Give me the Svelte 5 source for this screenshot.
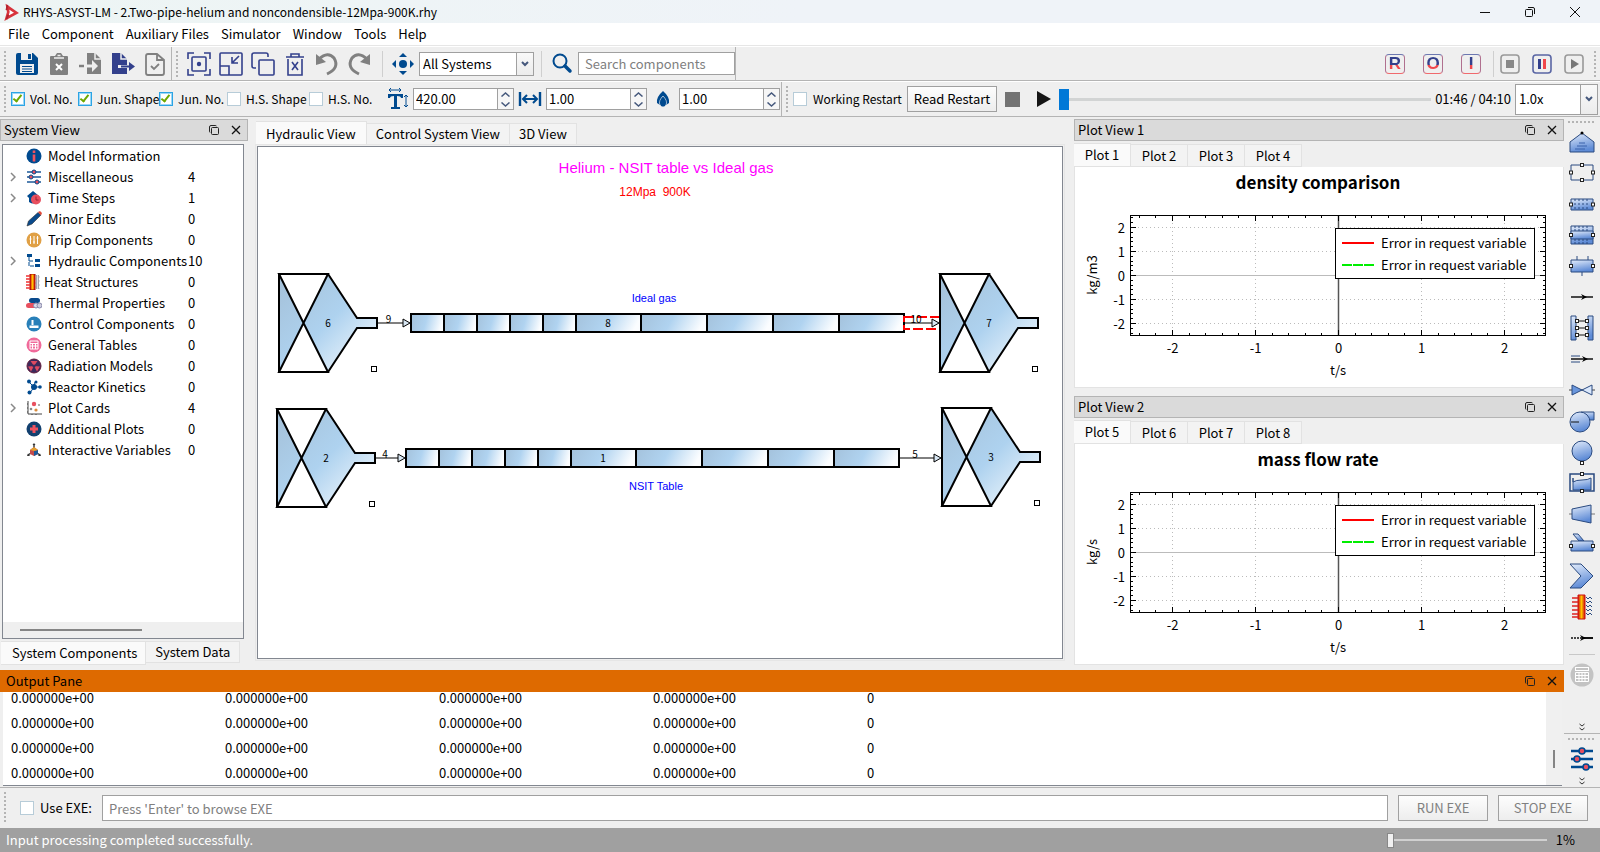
<script>
  /**
   * Main window of the plant modelling tool: toolbars, component tree,
   * hydraulic canvas, plot docks and the output pane.
   */

  const menus = ['File', 'Component', 'Auxiliary Files', 'Simulator', 'Window', 'Tools', 'Help'];

  // Gradients shared by the palette glyphs (defined once in the markup)
  const B = 'fill="url(#blue)" stroke="#2a4a80"';
  const node = (x, y) => `<rect x="${x - 1.5}" y="${y - 1.5}" width="3" height="3" fill="#fff" stroke="#222"/>`;

  const icons = {
    logo: '<path d="M6 4 16 11 5 17 7 10z" fill="#fff" stroke="#d8343c" stroke-width="3"/><path d="M6 2 5 8M5 18l2-5" stroke="#b0262e" stroke-width="2"/>',
    save: '<path d="M1 3q0-2 2-2h15l5 5v15q0 2-2 2H3q-2 0-2-2z" fill="#004a8f"/><path d="M6 1h11v7H6z" fill="#efefef"/><path d="M13 2h3v5h-3z" fill="#004a8f"/><path d="M5 12h14v9H5z" fill="#efefef"/><path d="M7 14.500h10M7 17h10M7 19.500h10" stroke="#004a8f"/>',
    clear: '<path d="M3 5q0-1 1-1h4l2-3h4l2 3h4q1 0 1 1v17q0 1-1 1H4q-1 0-1-1z" fill="#808080"/><path d="M7 6h10M10.500 3.500h3" stroke="#efefef" stroke-width="1.500"/><path d="m9 12 6 6m0-6-6 6" stroke="#fff" stroke-width="2"/>',
    importFile: '<path d="M8 1h8l6 6v15H8z" fill="#808080"/><path d="M16 1v6h6" fill="none" stroke="#efefef" stroke-width="1.500"/><path d="M0 14h5" stroke="#808080" stroke-width="2.500"/><path d="M6 14h9" stroke="#efefef" stroke-width="3"/><path d="m13 8 6 6-6 6z" fill="#efefef"/>',
    exportFile: '<path d="M1 1h9l6 6v15H1z" fill="#33408c"/><path d="M10 1v6h6" fill="none" stroke="#efefef" stroke-width="1.500"/><path d="M7 13h16v3H7z" fill="#efefef"/><path d="M10 14.500h9" stroke="#33408c" stroke-width="2"/><path d="m18 10 6 4.500-6 4.500z" fill="#33408c"/>',
    checkFile: '<path d="M3 4q0-2 2-2h9l7 6v13q0 2-2 2H5q-2 0-2-2zM14 2v6h7" fill="none" stroke="#808080" stroke-width="1.800"/><path d="m8 14 3 3 5-5" fill="none" stroke="#808080" stroke-width="1.800"/>',
    focus: '<path d="M1 7V1h6M17 1h6v6M23 17v6h-6M7 23H1v-6" fill="none" stroke="#33408c" stroke-width="1.600"/><rect x="5" y="5" width="14" height="14" rx="1" fill="none" stroke="#33408c" stroke-width="1.600"/><circle cx="12" cy="12" r="2.200" fill="#33408c"/>',
    shrink: '<rect x="1" y="1" width="22" height="22" rx="1" fill="none" stroke="#33408c" stroke-width="1.600"/><path d="M1 14h9v9M20 4l-7 7M13 5v6h6" fill="none" stroke="#33408c" stroke-width="1.600"/>',
    copy: '<rect x="8" y="8" width="15" height="15" rx="1" fill="none" stroke="#33408c" stroke-width="1.600"/><path d="M5 16H3q-2 0-2-2V3q0-2 2-2h12q2 0 2 2v2" fill="none" stroke="#33408c" stroke-width="1.600"/>',
    trash: '<path d="M3 5h18M8 5V2h8v3M5 7v16h14V7" fill="none" stroke="#33408c" stroke-width="1.600"/><path d="m9 10 6 8m0-8-6 8" stroke="#33408c" stroke-width="1.600"/>',
    undo: '<path d="M4 7q9-8 15-1 6 10-7 16" fill="none" stroke="#808080" stroke-width="3"/><path d="M1 2v11l10-3z" fill="#808080"/>',
    redo: '<path d="M20 7q-9-8-15-1-6 10 7 16" fill="none" stroke="#808080" stroke-width="3"/><path d="M23 2v11l-10-3z" fill="#808080"/>',
    pan: '<circle cx="12" cy="12" r="4" fill="#004a8f"/><path d="m12 1 4 4H8zM12 23l4-4H8zM1 12l4-4v8zM23 12l-4-4v8z" fill="#004a8f"/>',
    search: '<circle cx="10" cy="9" r="6.500" fill="none" stroke="#004a8f" stroke-width="2"/><path d="m15 14 5 5" stroke="#004a8f" stroke-width="3.500" stroke-linecap="round"/>',
    stop: '<rect x="3" y="3" width="18" height="18" rx="3" fill="none" stroke="#999" stroke-width="1.600"/><path d="M8 8h8v8H8z" fill="#888"/>',
    pause: '<rect x="3" y="3" width="18" height="18" rx="3" fill="none" stroke="#5a66a4" stroke-width="1.600"/><path d="M8 7h3v10H8z" fill="#33408c"/><path d="M13 7h3v10h-3z" fill="#f0474c"/>',
    play: '<rect x="3" y="3" width="18" height="18" rx="3" fill="none" stroke="#999" stroke-width="1.600"/><path d="m9 7 8 5-8 5z" fill="#777"/>',
    textSize: '<path d="M3 7h15v4h-2q0-2-4-2v11h3v2H6v-2h3V9q-4 0-4 2H3z" fill="#004a8f"/><path d="M4 3h12M6 1 4 3l2 2M14 1l2 2-2 2M21 8v12M19 10l2-2 2 2M19 18l2 2 2-2" fill="none" stroke="#004a8f"/>',
    width: '<path d="M2 5v14M22 5v14" stroke="#004a8f" stroke-width="2.400"/><path d="M5 12h14M9 8l-4 4 4 4M15 8l4 4-4 4" fill="none" stroke="#004a8f" stroke-width="2"/>',
    drop: '<path d="M12 4q7 6 6 12l-3 2q1-5-3-9-4 4-3 9l-3-2Q5 10 12 4z" fill="#004a8f"/><path d="M12 9q5 5 3 9-3 4-6 0-2-4 3-9z" fill="#004a8f" stroke="#efefef" stroke-width=".6"/>',
    info: '<circle cx="8" cy="8" r="7.500" fill="#004a8f"/><path d="M8 2.500v2.500M8 6.500v7" stroke="#f0525f" stroke-width="2.600"/>',
    sliders: '<path d="M1 3h14M1 8h14M1 13h14" stroke="#1d5a99" stroke-width="1.400"/><g fill="#e8505f" stroke="#004a8f"><circle cx="8" cy="3" r="2"/><circle cx="5" cy="8" r="2"/><circle cx="11" cy="13" r="2"/></g>',
    time: '<path d="M1 6 7 1l6 5v6q-6 3-10 0V8z" fill="#004a8f"/><circle cx="10" cy="9.500" r="5" fill="#e8505f"/><path d="M10 6.500v3.500h2.500" stroke="#923" fill="none"/>',
    pencil: '<path d="m1 15 1.500-5L12 1.500 15 4 6 13z" fill="#0a4a8c" stroke="#333" stroke-width=".6"/><path d="m12 1 2-1 2 2-1 2.500z" fill="#e04a3a"/>',
    trip: '<circle cx="8" cy="8" r="7.500" fill="#e0a045"/><path d="M4.500 4v8M8 4v8M11.500 4v8M3.500 7h2M7 10h2M10.500 6h2" stroke="#fff"/>',
    hydraulic: '<path d="M1 1h5v3H1zM9 6h5v3H9zM9 11h5v3H9z" fill="#004a8f"/><path d="M3 4v9h5M3 8h5" stroke="#004a8f" fill="none" stroke-dasharray="4 1"/>',
    heat: '<path d="M4 0h5v16H4z" fill="url(#hot)" stroke="#a00"/><path d="M0 2h4M0 5h4M0 8h4M0 11h4M0 14h4" stroke="#e33" stroke-width="1.400"/><path d="m10 1 1 2-1 2 1 2-1 2 1 2-1 2 1 2M12 1l1 2-1 2 1 2-1 2 1 2-1 2 1 2" stroke="#667" fill="none" stroke-width=".8"/>',
    thermal: '<rect x="3" y="3" width="11" height="5" rx="2.500" fill="#0a4a8c"/><rect x="0" y="8" width="12" height="5" rx="2.500" fill="#e8505f"/><circle cx="10" cy="10.500" r="2.500" fill="#dde" stroke="#88a"/><circle cx="13.500" cy="10.500" r="2.500" fill="#ccd" stroke="#88a"/>',
    control: '<circle cx="8" cy="8" r="7.500" fill="#2980b9"/><path d="M3.500 9.500h9V12h-9zM5.500 4h2v5h-2z" fill="#fff"/>',
    tables: '<circle cx="8" cy="8" r="7.500" fill="#f06a9a"/><path d="M4 4h8v8H4zM4 6.500h8M4 9h8M6.500 6v6M9.500 6v6" stroke="#fff" fill="none"/>',
    radiation: '<circle cx="8" cy="8" r="7" fill="#3c2a5c" stroke="#611b3c"/><g fill="#e04a60"><path d="M8 8 4.500 3h7zM8 8l6 .500-3 5zM8 8l-6 .500 3 5z"/></g><circle cx="8" cy="8" r="1.600" fill="#3c2a5c"/>',
    kinetics: '<path d="M8 8 3 3M8 8l6 0M8 8l-4 6M8 8l1-5" stroke="#004a8f"/><g fill="#004a8f"><circle cx="8" cy="8" r="3"/><circle cx="3" cy="2.500" r="2"/><circle cx="14" cy="8" r="1.800"/><circle cx="3.500" cy="13.500" r="2"/><circle cx="10" cy="3" r="1.500"/></g>',
    plots: '<path d="M2 1v13h14M1 4h1M1 8h1M1 12h1M6 14v1M10 14v1" stroke="#444" fill="none"/><circle cx="8" cy="4" r="2.200" fill="#e8505f"/><circle cx="5" cy="9" r="1.300" fill="#888"/><circle cx="10" cy="10" r="1.600" fill="#d98a3a"/><circle cx="13" cy="5" r="1.100" fill="#999"/>',
    plus: '<circle cx="8" cy="8" r="7.500" fill="#12406f"/><path d="M8 4v8M4 8h8" stroke="#f0525f" stroke-width="3"/>',
    interactive: '<path d="M8 2v5M8 9l-6 4M8 9l6 4" stroke="#333" stroke-width="1.400"/><path d="m8 5 4 3v4l-4 2-4-2V8z" fill="#c54a4a"/><path d="m8 9 4-1v4l-4 2z" fill="#1d5a99"/><path d="m8 5 4 3-4 1-4-1z" fill="#e0a030"/><path d="m6.500 3 1.500-2 1.500 2zM1 14l1-2.500L4 14zM15 14l-1-2.500-2 2.500z" fill="#333"/>',
    calc: '<circle cx="13" cy="13" r="11.500" fill="#c3c3c3"/><rect x="6.500" y="5.500" width="13" height="3" fill="none" stroke="#fff"/><path d="M6.500 10.500h13v9h-13zM6.500 13.500h13M6.500 16.500h13M10 10.500v9M13 10.500v9M16 10.500v9" fill="none" stroke="#fff"/>',
    bigSliders: '<path d="M2 5h22M2 13h22M2 21h22" stroke="#004a8f" stroke-width="2.400"/><g fill="#e8505f" stroke="#004a8f" stroke-width="1.600"><circle cx="13" cy="5" r="3"/><circle cx="8" cy="13" r="3"/><circle cx="17" cy="21" r="3"/></g>'
  };

  const editTools = [
    ['Save', icons.save], ['Clear', icons.clear], ['Import', icons.importFile],
    ['Export', icons.exportFile], ['Check input', icons.checkFile]
  ];
  const viewTools = [
    ['Fit to view', icons.focus], ['Shrink', icons.shrink], ['Copy', icons.copy],
    ['Delete', icons.trash], ['Undo', icons.undo], ['Redo', icons.redo]
  ];
  const runTools = [['Stop run', icons.stop], ['Pause run', icons.pause], ['Start run', icons.play]];

  let flags = $state([
    { label: 'Vol. No.', on: true },
    { label: 'Jun. Shape', on: true },
    { label: 'Jun. No.', on: true },
    { label: 'H.S. Shape', on: false },
    { label: 'H.S. No.', on: false }
  ]);

  const spins = [
    { label: 'Zoom', icon: icons.textSize, value: '420.00' },
    { label: 'Width', icon: icons.width, value: '1.00' },
    { label: 'Flow', icon: icons.drop, value: '1.00' }
  ];

  const tree = [
    { label: 'Model Information', icon: icons.info, count: '' },
    { label: 'Miscellaneous', icon: icons.sliders, count: 4, open: true },
    { label: 'Time Steps', icon: icons.time, count: 1, open: true },
    { label: 'Minor Edits', icon: icons.pencil, count: 0 },
    { label: 'Trip Components', icon: icons.trip, count: 0 },
    { label: 'Hydraulic Components', icon: icons.hydraulic, count: 10, open: true },
    { label: 'Heat Structures', icon: icons.heat, count: 0, tight: true },
    { label: 'Thermal Properties', icon: icons.thermal, count: 0 },
    { label: 'Control Components', icon: icons.control, count: 0 },
    { label: 'General Tables', icon: icons.tables, count: 0 },
    { label: 'Radiation Models', icon: icons.radiation, count: 0 },
    { label: 'Reactor Kinetics', icon: icons.kinetics, count: 0 },
    { label: 'Plot Cards', icon: icons.plots, count: 4, open: true },
    { label: 'Additional Plots', icon: icons.plus, count: 0 },
    { label: 'Interactive Variables', icon: icons.interactive, count: 0 }
  ];

  // Component palette, top to bottom
  const palette = [
    ['Tank', `<path d="M1 23V13L13 4l12 9v10z" ${B}/><path d="M10 14h6M8 17h10M6 20h10" stroke="#3a62ac"/><circle cx="13" cy="4" r="1.500"/>`],
    ['Single volume', `<path d="M2 5h22v15H2z" fill="none" stroke="#2a4a80"/>${node(13, 5)}${node(13, 20)}${node(2, 12.5)}${node(24, 12.5)}`],
    ['Pipe', `<path d="M2 8h22v11H2z" ${B}/><path d="M6 8v11M10 8v11M14 8v11M18 8v11" stroke="#2a4a80" stroke-dasharray="2 2"/>${node(2, 13.5)}${node(24, 13.5)}`],
    ['Annulus', `<path d="M2 4h22v18H2z" ${B}/><path d="M2 9h22v8H2z" ${B}/><path d="M6 4v5M10 4v5M14 4v5M18 4v5M6 17v5M10 17v5M14 17v5M18 17v5" stroke="#2a4a80" stroke-dasharray="2 1"/>${node(2, 13)}${node(24, 13)}`],
    ['Branch', `<path d="M2 7h22v12H2z" ${B}/><path d="M8 3v4M19 3v4M13 19v4" stroke="#2a4a80"/>${node(2, 13)}${node(24, 13)}`],
    ['Single junction', '<path d="M2 13h22" stroke="#111" stroke-width="1.500"/><path d="m12 10 6 3-6 3 2-3z"/>'],
    ['Multiple junction', `<path d="M2 1h5v24H2zM19 1h5v24h-5z" ${B}/><path d="M7 6h12M7 13h12M7 20h12" stroke="#111"/>${node(8, 6)}${node(18, 6)}${node(8, 13)}${node(18, 13)}${node(8, 20)}${node(18, 20)}`],
    ['Time dependent junction', '<path d="M2 13h22" stroke="#111" stroke-width="1.500"/><path d="M2 10h9M2 16h9" stroke="#2a4a80"/><path d="m13 10 6 3-6 3 2-3z"/>'],
    ['Valve', `<path d="M0 13h26" stroke="#444"/><path d="M3 8v10l10-5z" fill="#6a96dc" stroke="#2a4a80"/><path d="M23 8v10l-10-5z" fill="#dbe8fb" stroke="#2a4a80"/>`],
    ['Pump', `<path d="M12 4h13v8h-6z" ${B}/><circle cx="11" cy="14" r="10" ${B}/><path d="M2 14h8" stroke="#111"/>`],
    ['Accumulator', `<circle cx="13" cy="12" r="10" ${B}/>${node(13, 24)}`],
    ['Pressurizer', `<path d="M1 4h24v17H1z" fill="none" stroke="#2a4a80" stroke-width="1.500"/><path d="M4 8v12h18V8q-3 2-9 2t-9 2z" ${B}/>${node(13, 4)}${node(13, 21)}`],
    ['Turbine', `<path d="M0 13h26" stroke="#777"/><path d="M3 8 22 4v18L3 18z" ${B}/>`],
    ['Jet pump', `<path d="m4 2 6 7h5l-6-7z" ${B}/><path d="M2 9h22v10H2z" ${B}/>${node(2, 14)}${node(24, 14)}`],
    ['Separator', `<path d="M1 1h11l12 12-12 12H1l11-12z" ${B}/>`],
    ['Heat structure', '<path d="M9 1h7v24H9z" fill="url(#hot)" stroke="#c11"/><path d="M3 4h6M3 8h6M3 12h6M3 16h6M3 20h6M3 23h6" stroke="#d22" stroke-width="1.500"/><path d="m17 3 2 2 2-2 2 2M17 7l2 2 2-2 2 2M17 11l2 2 2-2 2 2M17 15l2 2 2-2 2 2M17 19l2 2 2-2 2 2" stroke="#2a4a80" fill="none"/>'],
    ['Control link', '<path d="M2 13h11" stroke="#111" stroke-width="1.500" stroke-dasharray="2 1"/><path d="M15 13h9" stroke="#111" stroke-width="2"/><path d="m11 10 6 3-6 3 2-3z"/>']
  ];

  // Canvas items, in canvas coordinates
  const volumes = [
    { id: 6, x: 21, y: 127 },
    { id: 2, x: 19, y: 262 },
    { id: 7, x: 682, y: 127 },
    { id: 3, x: 684, y: 261 }
  ];
  const pipes = [
    { id: 8, x: 153, y: 167 },
    { id: 1, x: 148, y: 302 }
  ];
  const cells = [0, 33, 66, 99, 132, 165, 230, 296, 362, 428, 493];
  const segments = cells.slice(0, -1).map((x, i) => ({ x, w: cells[i + 1] - x }));
  const junctions = [
    { id: 9, x1: 120, x2: 153, y: 176 },
    { id: 4, x1: 118, x2: 148, y: 311 },
    { id: 10, x1: 646, x2: 682, y: 176, selected: true },
    { id: 5, x1: 642, x2: 684, y: 311 }
  ];

  const plotDocks = [
    { name: 'Plot View 1', tabs: ['Plot 1', 'Plot 2', 'Plot 3', 'Plot 4'], title: 'density comparison', unit: 'kg/m3' },
    { name: 'Plot View 2', tabs: ['Plot 5', 'Plot 6', 'Plot 7', 'Plot 8'], title: 'mass flow rate', unit: 'kg/s' }
  ];
  const major = [-2, -1, 0, 1, 2];
  const minor = Array.from({ length: 25 }, (_, i) => (i - 12) / 5);
  const px = (v) => Math.round(263 + v * 83) + 0.5;
  const py = (v) => Math.round(108 - v * 24) + 0.5;

  const outputRows = Array.from({ length: 4 }, () => [
    '0.000000e+00', '0.000000e+00', '0.000000e+00', '0.000000e+00', '0'
  ]);
</script>

{#snippet tool(label, body)}
  <button class="tool" aria-label={label}>
    <svg width="24" height="24" viewBox="0 0 24 24">{@html body}</svg>
  </button>
{/snippet}

{#snippet dockButtons()}
  <button class="dock-btn" aria-label="Float">
    <svg width="10" height="10" viewBox="0 0 10 10" fill="none" stroke="#222">
      <rect x="2.500" y="2.500" width="7" height="7" rx="1" />
      <path d="M1 7.500Q.5 7 .5 6V2Q.5.5 2 .5h4q1 0 1.500.5" />
    </svg>
  </button>
  <button class="dock-btn" aria-label="Close">
    <svg width="10" height="10" viewBox="0 0 10 10" stroke="#111" stroke-width="1.300"><path d="m1 1 8 8M9 1 1 9" /></svg>
  </button>
{/snippet}

{#snippet expander()}
  <button class="more" aria-label="More">
    <svg width="8" height="8" viewBox="0 0 8 8" fill="none" stroke="#333"><path d="m1.500 1 2.500 2 2.500-2M1.500 5 4 7l2.500-2" /></svg>
  </button>
{/snippet}

<svg class="defs" aria-hidden="true">
  <defs>
    <linearGradient id="blue" x1="0" y1="0" x2="0.300" y2="1">
      <stop offset="0" stop-color="#e4edfb" /><stop offset="1" stop-color="#5e8bd6" />
    </linearGradient>
    <linearGradient id="hot">
      <stop offset="0" stop-color="#d01010" /><stop offset="0.500" stop-color="#ffc400" /><stop offset="1" stop-color="#d01010" />
    </linearGradient>
    <linearGradient id="volume" x1="0" y1="0" x2="1" y2="1">
      <stop offset="0" stop-color="#a4c0d8" /><stop offset="0.500" stop-color="#aed2ef" /><stop offset="1" stop-color="#fff" />
    </linearGradient>
    <linearGradient id="cell" x1="0" y1="0" x2="1" y2="0.150">
      <stop offset="0" stop-color="#a4c2dc" /><stop offset="0.500" stop-color="#b0d3f0" /><stop offset="1" stop-color="#fbfdff" />
    </linearGradient>
  </defs>
</svg>

<div class="app">
  <header class="titlebar">
    <svg width="18" height="20" viewBox="0 0 20 20">{@html icons.logo}</svg>
    <span class="grow">RHYS-ASYST-LM - 2.Two-pipe-helium and noncondensible-12Mpa-900K.rhy</span>
    <button class="win" aria-label="Minimize"><svg width="12" height="12" stroke="#111"><path d="M1 6.500h10" /></svg></button>
    <button class="win" aria-label="Restore">
      <svg width="12" height="12" fill="none" stroke="#111"><rect x="1.500" y="3.500" width="7" height="7" rx="1" /><path d="M4 1.500h5q1.500 0 1.500 1.500v5" /></svg>
    </button>
    <button class="win" aria-label="Close window"><svg width="12" height="12" stroke="#111"><path d="m1 1 10 10M11 1 1 11" /></svg></button>
  </header>

  <nav class="menubar">
    {#each menus as menu}<button>{menu}</button>{/each}
  </nav>

  <div class="bar bar-main">
    <div class="group">
      <i class="grip"></i>
      {#each editTools as [label, body]}{@render tool(label, body)}{/each}
    </div>
    <div class="group">
      <i class="grip"></i>
      {#each viewTools as [label, body]}{@render tool(label, body)}{/each}
      <i class="sep wide"></i>
      {@render tool('Pan', icons.pan)}
      <div class="combo systems">
        <select aria-label="System"><option>All Systems</option></select>
        <svg width="8" height="6" viewBox="0 0 8 6"><path d="m1 1 3 3 3-3" fill="none" stroke="#45587c" stroke-width="2" /></svg>
      </div>
      <i class="sep wide"></i>
      {@render tool('Search', icons.search)}
      <input class="search" type="text" placeholder="Search components" aria-label="Search components" />
    </div>
    <div class="group right">
      {#each ['R', 'O', 'I'] as letter}
        <button class="mode"><span>{letter}</span></button>
      {/each}
      <i class="sep"></i>
      {#each runTools as [label, body]}{@render tool(label, body)}{/each}
      <i class="grip"></i>
    </div>
  </div>

  <div class="bar bar-view">
    <div class="group">
      <i class="grip"></i>
      <div class="flags">
        {#each flags as flag}
          <label class="check"><input type="checkbox" bind:checked={flag.on} />{flag.label}</label>
        {/each}
      </div>
      {#each spins as spin}
        <div class="spin">
          <svg width="24" height="24" viewBox="0 0 24 24">{@html spin.icon}</svg>
          <div class="spin-box">
            <input type="number" step="0.01" aria-label={spin.label} value={spin.value} />
            <div class="arrows">
              <button aria-label="{spin.label} up"><svg width="9" height="5" viewBox="0 0 9 5"><path d="M.5 4.500 4.500 1l4 3.500" /></svg></button>
              <button aria-label="{spin.label} down"><svg width="9" height="5" viewBox="0 0 9 5"><path d="m.5.5 4 3.500 4-3.500" /></svg></button>
            </div>
          </div>
        </div>
      {/each}
    </div>
    <div class="group replay">
      <i class="grip"></i>
      <label class="check restart"><input type="checkbox" />Working Restart</label>
      <button class="push read">Read Restart</button>
      <button class="media" aria-label="Stop"><svg width="15" height="15"><path d="M0 0h15v15H0z" fill="#737373" /></svg></button>
      <button class="media" aria-label="Play"><svg width="14" height="16"><path d="M0 0l14 8-14 8z" fill="#151515" /></svg></button>
      <input class="seek" type="range" min="0" max="100" value="0" aria-label="Replay position" />
      <span class="clock">01:46 / 04:10</span>
      <div class="combo speed">
        <select aria-label="Speed"><option>1.0x</option></select>
        <svg width="8" height="6" viewBox="0 0 8 6"><path d="m1 1 3 3 3-3" fill="none" stroke="#45587c" stroke-width="2" /></svg>
      </div>
    </div>
  </div>

  <div class="middle">
    <div class="main">
      <div class="work">
        <!-- Component tree -->
        <section class="dock">
          <div class="dock-head"><span class="grow">System View</span>{@render dockButtons()}</div>
          <div class="tree-box">
            <ul>
              {#each tree as item}
                <li class:tight={item.tight}>
                  {#if item.open}
                    <button class="twist" aria-label="Expand {item.label}">
                      <svg width="6" height="10" viewBox="0 0 6 10"><path d="m1 1 4 4-4 4" fill="none" stroke="#888" stroke-width="1.500" /></svg>
                    </button>
                  {:else}<i></i>{/if}
                  <svg width="16" height="16" viewBox="0 0 16 16">{@html item.icon}</svg>
                  <span class="name">{item.label}</span>
                  <span>{item.count}</span>
                </li>
              {/each}
            </ul>
            <div class="hscroll"><i></i></div>
          </div>
          <div class="tabs below">
            <button class="active">System Components</button>
            <button>System Data</button>
          </div>
        </section>

        <!-- Hydraulic canvas -->
        <section class="center">
          <div class="tabs views">
            <button class="active">Hydraulic View</button>
            <button>Control System View</button>
            <button>3D View</button>
          </div>
          <div class="canvas-frame">
            <svg class="canvas" width="100%" height="100%">
              <g class="caption">
                <text x="408" y="26" font-size="15" fill="#f0f">Helium - NSIT table vs Ideal gas</text>
                <text x="397" y="49" font-size="12" fill="#f00" xml:space="preserve">12Mpa  900K</text>
                <text x="396" y="155" font-size="11" fill="#00f">Ideal gas</text>
                <text x="398" y="343" font-size="11" fill="#00f">NSIT Table</text>
              </g>

              {#each pipes as pipe}
                <g transform="translate({pipe.x} {pipe.y})">
                  {#each segments as s}
                    <rect x={s.x} width={s.w} height="18" fill="url(#cell)" stroke="#000" stroke-width="2" />
                  {/each}
                  <text x="197" y="13">{pipe.id}</text>
                </g>
              {/each}

              {#each junctions as j}
                {#if j.selected}
                  <rect x={j.x1} y={j.y - 6} width={j.x2 - j.x1} height="12" fill="none" stroke="#f00" stroke-width="2" stroke-dasharray="10 3" />
                {/if}
                <path d="M{j.x1} {j.y}H{j.x2 - 8}" stroke="#000" />
                <path d="M{j.x2 - 8} {j.y - 4}l7 4-7 4z" fill="#d7e6f3" stroke="#000" />
                <text x={(j.x1 + j.x2) / 2 - 6} y={j.y}>{j.id}</text>
              {/each}

              {#each volumes as v}
                <g transform="translate({v.x} {v.y})" stroke="#000" stroke-width="2">
                  <path d="M0 0H49L78 44H98V54H78L49 98H0z" fill="url(#volume)" />
                  <path d="M0 0H49L24.500 49zM0 98H49L24.500 49z" fill="#fff" />
                  <rect x="92.500" y="92.500" width="5" height="5" fill="#fff" stroke-width="1" />
                  <text x="49" y="53" stroke="none">{v.id}</text>
                </g>
              {/each}
            </svg>
          </div>
        </section>

        <!-- Plot docks -->
        <div class="plots">
          {#each plotDocks as dock}
            <section class="dock">
              <div class="dock-head"><span class="grow">{dock.name}</span>{@render dockButtons()}</div>
              <div class="tabs plot-tabs">
                {#each dock.tabs as tab, i}<button class:active={i === 0}>{tab}</button>{/each}
              </div>
              <div class="plot">
                <svg width="100%" height="100%">
                  <text class="plot-title" x="243" y="22">{dock.title}</text>
                  <g stroke="#bbb" stroke-dasharray="1 3">
                    {#each major as v}
                      <path d="M{px(v)} 48V168M55 {py(v)}H470" />
                    {/each}
                  </g>
                  <path d="M55 108.500H470" stroke="#bbb" />
                  <path d="M263.500 48V168" stroke="#555" stroke-width="1.500" />
                  <g stroke="#000">
                    <rect x="55.500" y="48.500" width="415" height="120" fill="none" />
                    {#each minor as v}
                      <path d="M{px(v)} 49v2M{px(v)} 168v-2M56 {py(v)}h2M470 {py(v)}h-2" />
                    {/each}
                    {#each major as v}
                      <path d="M{px(v)} 49v5M{px(v)} 168v-5M56 {py(v)}h5M470 {py(v)}h-5" />
                    {/each}
                  </g>
                  {#each major as v}
                    <text class="mid" x={px(v)} y="186">{v}</text>
                    <text class="end" x="50" y={py(v) + 5}>{v}</text>
                  {/each}
                  <text class="mid" x="263" y="208">t/s</text>
                  <text class="mid" transform="translate(22 108) rotate(-90)">{dock.unit}</text>
                  <rect x="260.500" y="61.500" width="199" height="50" fill="#fff" stroke="#000" />
                  <path d="M267 76h32" stroke="#f00" stroke-width="2" />
                  <path d="M267 98h32" stroke="#0e0" stroke-width="2" stroke-dasharray="10 1" />
                  <text x="306" y="81">Error in request variable</text>
                  <text x="306" y="103">Error in request variable</text>
                </svg>
              </div>
            </section>
          {/each}
        </div>
      </div>

      <!-- Output pane -->
      <section class="output">
        <div class="output-head"><span class="grow">Output Pane</span>{@render dockButtons()}</div>
        <div class="output-body">
          <table>
            <tbody>
              {#each outputRows as row}
                <tr>{#each row as value}<td>{value}</td>{/each}</tr>
              {/each}
            </tbody>
          </table>
          <div class="vscroll"><i></i></div>
        </div>
      </section>
    </div>

    <!-- Component palette -->
    <aside class="rail">
      <i class="grip flat"></i>
      {#each palette as [label, body]}
        <button class="part" aria-label={label}><svg width="26" height="26" viewBox="0 0 26 26">{@html body}</svg></button>
      {/each}
      <i class="line"></i>
      <button class="part calc" aria-label="Calculator"><svg width="26" height="26" viewBox="0 0 26 26">{@html icons.calc}</svg></button>
      <div class="grow"></div>
      {@render expander()}
      <i class="edge"></i>
      <i class="grip flat"></i>
      <button class="part" aria-label="Settings"><svg width="26" height="26" viewBox="0 0 26 26">{@html icons.bigSliders}</svg></button>
      {@render expander()}
    </aside>
  </div>

  <div class="exe">
    <i class="grip"></i>
    <label class="check"><input type="checkbox" />Use EXE:</label>
    <input class="path" type="text" placeholder="Press 'Enter' to browse EXE" aria-label="EXE path" />
    <button class="push" disabled>RUN EXE</button>
    <button class="push" disabled>STOP EXE</button>
  </div>

  <footer class="status">
    <span class="grow">Input processing completed successfully.</span>
    <input class="zoom" type="range" min="0" max="100" value="0" aria-label="Zoom level" />
    <span>1%</span>
  </footer>
</div>

<style>
  :global(body) {
    background: #efefef;
  }

  .app {
    min-height: 100vh;
    display: flex;
    flex-direction: column;
    background: #efefef;
    color: #000;
    font: 13px/16px 'Noto Sans CJK SC', 'Noto Sans', sans-serif;
  }

  .defs {
    position: absolute;
    width: 0;
    height: 0;
  }

  .app :global(svg) {
    display: block;
    flex: none;
  }

  button, input, select {
    font: inherit;
    color: inherit;
    margin: 0;
    box-sizing: border-box;
    border-radius: 0;
  }

  button {
    display: flex;
    align-items: center;
    justify-content: center;
    padding: 0;
    border: none;
    background: none;
    white-space: nowrap;
  }

  i { display: block; }
  .grow { flex: 1; }

  /* Title and menu */
  .titlebar {
    height: 23px;
    display: flex;
    align-items: center;
    gap: 3px;
    padding: 0 4px 0 2px;
    background: linear-gradient(90deg, #edf5f4, #eff3f8 50%);
    font-size: 12px;
  }

  .win {
    width: 42px;
    height: 20px;
  }

  .menubar {
    height: 23px;
    display: flex;
    align-items: center;
    box-sizing: border-box;
    padding-left: 2px;
    background: #fff;
    border-bottom: 1px solid #e6e6e6;
  }

  .menubar button { padding: 0 6px; }

  /* Toolbars */
  .bar {
    display: flex;
    border-bottom: 1px solid #b4b4b4;
    border-top: 1px solid #fff;
    box-sizing: border-box;
  }

  .bar-main { height: 35px; }
  .bar-view { height: 36px; }

  .group {
    display: flex;
    align-items: center;
    border-right: 1px solid #b4b4b4;
  }

  .group.right {
    margin-left: auto;
    border-right: none;
  }

  .grip {
    width: 2px;
    height: 26px;
    margin: 0 5px 0 4px;
    flex: none;
    background: repeating-linear-gradient(#b4b4b4 0 2px, transparent 2px 4px);
  }

  .right .grip { margin-right: 4px; }

  .grip.flat {
    width: 28px;
    height: 2px;
    margin: 4px 0 3px;
    background: repeating-linear-gradient(90deg, #b4b4b4 0 2px, transparent 2px 4px);
  }

  .sep {
    width: 1px;
    height: 26px;
    margin-left: 3px;
    background: #cfcfcf;
  }

  .sep.wide { margin: 0 4px 0 7px; }

  .tool {
    width: 32px;
    height: 32px;
  }

  .mode {
    width: 38px;
    height: 32px;
  }

  .mode span {
    width: 18px;
    height: 18px;
    border: 1px solid #6c77b0;
    border-bottom-color: #f0696d;
    border-right-color: #b0708f;
    border-left-color: #b0708f;
    border-radius: 4px;
    font: bold 17px/18px 'Liberation Sans', Arial, sans-serif;
    color: transparent;
    background: linear-gradient(#33408c 55%, #f0474c 55%) text;
  }

  .combo {
    position: relative;
    background: #fff;
    border: 1px solid #a0a0a0;
    box-sizing: border-box;
    display: flex;
  }

  .combo select {
    width: 100%;
    border: none;
    background: linear-gradient(#a0a0a0, #a0a0a0) right 16px top / 1px 100% no-repeat, linear-gradient(#f9f9f9, #ececec) right / 16px 100% no-repeat, #fff;
    appearance: none;
    padding: 0 20px 0 3px;
  }

  .combo svg {
    position: absolute;
    right: 4px;
    top: calc(50% - 3px);
    pointer-events: none;
  }

  .systems {
    width: 115px;
    height: 24px;
  }

  .search {
    width: 157px;
    height: 23px;
    padding: 0 6px;
    border: 1px solid #a0a0a0;
    background: #fff;
  }

  ::placeholder {
    color: #808080;
    opacity: 1;
  }

  .flags {
    display: grid;
    grid-template-columns: 67px 81px 68px 82px 76px;
  }

  .check {
    display: flex;
    align-items: center;
    gap: 6px;
    white-space: nowrap;
  }

  .flags .check {
    gap: 5px;
    font-size: 12px;
  }

  .check input {
    appearance: none;
    width: 14px;
    height: 14px;
    flex: none;
    background: #fff;
    border: 1px solid #b7ccd8;
  }

  .check input:checked {
    position: relative;
    border-color: #2ba4e4;
    box-shadow: inset 0 0 0 1px #9bd6f6;
  }

  .check input:checked::after {
    content: '';
    position: absolute;
    left: 3px;
    top: 0;
    width: 3px;
    height: 7px;
    border: solid #6ea800;
    border-width: 0 2px 2px 0;
    transform: rotate(38deg);
  }

  .spin {
    display: flex;
    align-items: center;
    gap: 4px;
    padding-right: 4px;
  }

  .spin:last-child { padding-right: 1px; }

  .spin-box {
    display: flex;
    width: 101px;
    height: 22px;
    border: 1px solid #a0a0a0;
    background: #fff;
    box-sizing: border-box;
  }

  .spin-box input {
    width: 84px;
    padding: 0 2px;
    border: none;
    border-right: 1px solid #a0a0a0;
    background: none;
    appearance: textfield;
  }

  .spin-box input::-webkit-inner-spin-button { display: none; }

  .arrows {
    flex: 1;
    display: grid;
    background: #f6f6f6;
  }

  .arrows path {
    fill: none;
    stroke: #45587c;
    stroke-width: 1.500;
  }

  .replay {
    flex: 1;
    border-right: none;
    padding-right: 2px;
  }

  .restart {
    width: 114px;
    font-size: 12px;
  }

  .push {
    height: 26px;
    border: 1px solid #a0a0a0;
    background: linear-gradient(#fdfdfd, #ededed);
  }

  .read { width: 90px; }

  .media {
    width: 31px;
    height: 26px;
  }

  .seek {
    appearance: none;
    flex: 1;
    height: 22px;
    margin-right: 4px;
    background: linear-gradient(#d2d4d4, #d2d4d4) center / 100% 3px no-repeat;
  }

  .seek::-webkit-slider-thumb {
    appearance: none;
    width: 10px;
    height: 21px;
    background: #0078d7;
  }

  .clock { margin-right: 4px; }

  .speed {
    width: 83px;
    height: 31px;
  }

  /* Work area */
  .middle {
    flex: 1;
    display: flex;
    border-bottom: 1px solid #b4b4b4;
  }

  .main {
    flex: 1;
    min-width: 0;
    display: flex;
    flex-direction: column;
  }

  .work {
    flex: 1;
    display: grid;
    grid-template-columns: 248px minmax(0, 1fr) 490px;
    gap: 8px;
    padding: 2px 0 5px;
  }

  .dock {
    display: flex;
    flex-direction: column;
  }

  .dock-head {
    height: 22px;
    display: flex;
    align-items: center;
    padding: 0 0 0 3px;
    background: #dadada;
    border: 1px solid #b4b4b4;
    box-sizing: border-box;
  }

  .dock-btn {
    width: 22px;
    height: 18px;
  }

  .tree-box {
    flex: 1;
    display: flex;
    flex-direction: column;
    margin: 3px 4px 2px 2px;
    background: #fff;
    border: 1px solid #828790;
  }

  ul {
    flex: 1;
    margin: 0;
    padding: 0;
    list-style: none;
  }

  li {
    display: grid;
    grid-template-columns: 17px 16px 134px auto;
    column-gap: 6px;
    align-items: center;
    height: 21px;
    white-space: nowrap;
  }

  .twist { padding-left: 2px; }

  .tight .name { margin-left: -4px; }

  .hscroll {
    height: 16px;
    display: flex;
    align-items: center;
    background: #efefef;
  }

  .hscroll i {
    width: 122px;
    height: 2px;
    margin-left: 17px;
    background: #858585;
  }

  .tabs { display: flex; }

  .tabs button {
    box-sizing: border-box;
    border: 1px solid #e2e2e2;
    border-left: none;
    background: #f3f3f3;
  }

  .tabs .active { background: #fafafa; }

  .below {
    height: 24px;
    align-items: flex-start;
    padding-left: 1px;
  }

  .below button {
    height: 22px;
    padding: 0 9px;
  }

  .below .active {
    height: 24px;
    padding: 0 8px 0 11px;
  }

  .center {
    display: flex;
    flex-direction: column;
    padding-top: 2px;
  }

  .views {
    align-items: flex-end;
    height: 24px;
  }

  .views button {
    height: 22px;
    padding: 0 9px;
    border-bottom-color: #a0a0a0;
  }

  .views .active {
    height: 24px;
    padding: 0 10px;
    border-bottom: none;
  }

  .canvas-frame {
    flex: 1;
    margin: 1px 3px 6px 1px;
    background: #fff;
    border: 1px solid #828790;
    outline: 1px solid #e6e6e6;
    outline-offset: 1px;
  }

  .canvas {
    font-size: 10px;
    text-anchor: middle;
  }

  .caption { font-family: 'Liberation Sans', Arial, sans-serif; }

  .plots {
    display: grid;
    grid-template-rows: 1fr 1fr;
    gap: 8px;
  }

  .plot-tabs {
    height: 26px;
    align-items: flex-end;
  }

  .plot-tabs button {
    width: 57px;
    height: 23px;
  }

  .plot-tabs .active { height: 24px; }

  .plot {
    flex: 1;
    background: #fff;
    border: 1px solid #e3e3e3;
    border-top: none;
  }

  .plot text { font-size: 13px; }

  .plot .plot-title {
    font-size: 17px;
    font-weight: 700;
    text-anchor: middle;
  }

  .mid { text-anchor: middle; }
  .end { text-anchor: end; }

  /* Output */
  .output-head {
    height: 22px;
    display: flex;
    align-items: center;
    padding: 0 1px 0 6px;
    background: #de6a00;
  }

  .output-body {
    display: flex;
    align-items: flex-end;
    height: 93px;
    margin: 0 2px 1px 3px;
    overflow: hidden;
    background: #fff;
    border-bottom: 1px solid #828790;
  }

  table { border-collapse: collapse; }

  td {
    width: 206px;
    height: 25px;
    padding: 0 0 0 8px;
  }

  .vscroll {
    align-self: stretch;
    display: flex;
    align-items: flex-end;
    justify-content: center;
    width: 16px;
    margin-left: auto;
    background: #f0f0f0;
  }

  .vscroll i {
    width: 2px;
    height: 18px;
    margin-bottom: 17px;
    background: #858585;
  }

  /* Palette */
  .rail {
    width: 36px;
    display: flex;
    flex-direction: column;
    align-items: center;
  }

  .part {
    width: 32px;
    height: 31px;
  }

  .calc { margin-top: 4px; }

  .line {
    width: 26px;
    height: 1px;
    margin-top: 1px;
    background: #c8c8c8;
  }

  .edge {
    width: 100%;
    height: 1px;
    background: #b4b4b4;
  }

  .more {
    width: 20px;
    height: 13px;
  }

  /* Bottom */
  .exe {
    height: 40px;
    display: flex;
    align-items: center;
    gap: 10px;
    padding-right: 12px;
  }

  .exe .grip {
    height: 32px;
    margin-right: 4px;
  }

  .path {
    flex: 1;
    height: 26px;
    padding: 0 6px;
    background: #fff;
    border: 1px solid #a0a0a0;
  }

  .exe .push {
    width: 90px;
    color: #808080;
  }

  .status {
    height: 24px;
    display: flex;
    align-items: center;
    gap: 9px;
    padding: 0 25px 0 6px;
    color: #fff;
    background: #a0a0a0;
  }

  .status span:last-child { color: #000; }

  .zoom {
    appearance: none;
    width: 160px;
    height: 16px;
    background: linear-gradient(#d0d0d0, #d0d0d0) center / 100% 2px no-repeat;
  }

  .zoom::-webkit-slider-thumb {
    appearance: none;
    box-sizing: border-box;
    width: 7px;
    height: 15px;
    border: 1px solid #888;
    background: #f0f0f0;
  }
</style>
